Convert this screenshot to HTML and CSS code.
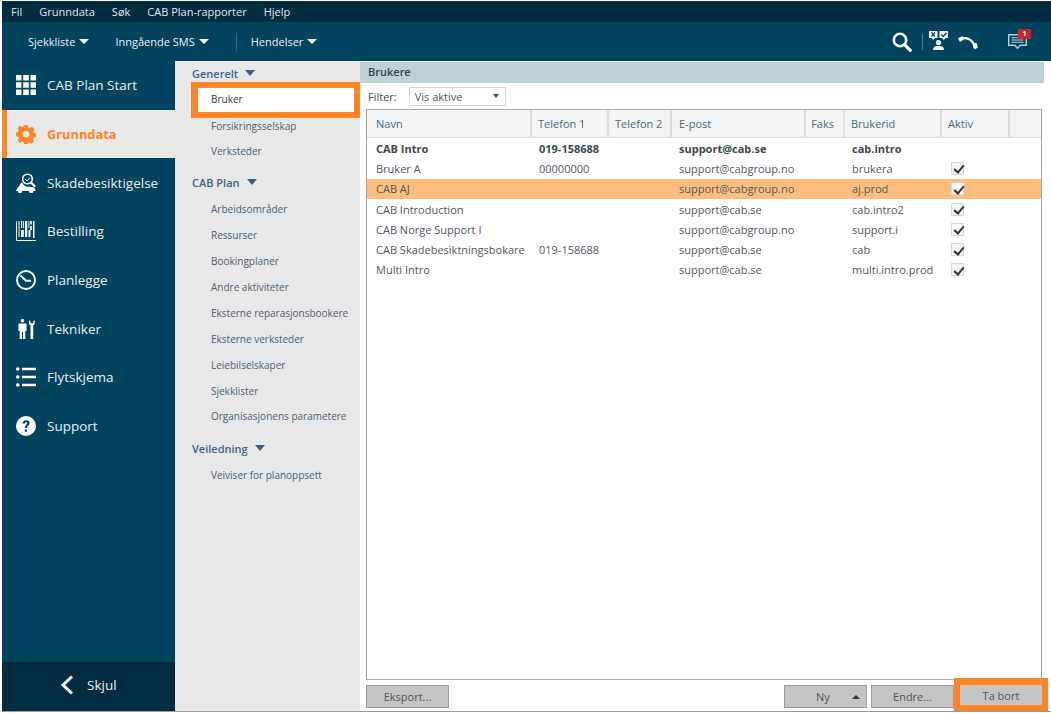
FILE: index.html
```html
<!DOCTYPE html>
<html lang="no">
<head>
<meta charset="utf-8">
<title>CAB Plan</title>
<link rel="stylesheet" href="styles.css">
</head>
<body>
<div class="app">
  <nav class="menubar">
    <span>Fil</span><span>Grunndata</span><span>Søk</span><span>CAB Plan-rapporter</span><span>Hjelp</span>
  </nav>
  <header class="toolbar">
    <span class="tool tool-a">Sjekkliste <i class="caret"></i></span>
    <span class="tool tool-b">Inngående SMS <i class="caret"></i></span>
    <span class="tool-sep"></span>
    <span class="tool">Hendelser <i class="caret"></i></span>
    <div class="tool-icons">
      <svg class="ti-search" width="20" height="20" viewBox="0 0 20 20"><circle cx="8" cy="8" r="6.200" fill="none" stroke="#fff" stroke-width="2.600"/><path d="M12.800 12.800 18.300 18.300" stroke="#fff" stroke-width="3.200" stroke-linecap="round"/></svg>
      <span class="ti-sep"></span>
      <svg class="ti-vote" width="19" height="19" viewBox="0 0 19 19"><path d="M0 0h8.500v7H6L4.300 9 2.500 7H0zM10.500 0H19v7h-2.500l-1.700 2L13 7h-2.500z" fill="#fff"/><path d="M2.500 1.500l3.400 4M5.900 1.500l-3.400 4" stroke="#00435f" stroke-width="1.300"/><path d="M12.300 3.500l2 2 3-3.700" stroke="#00435f" stroke-width="1.400" fill="none"/><circle cx="9.500" cy="11.500" r="2.600" fill="#fff"/><path d="M4 19c0-3 2-4.300 5.500-4.300S15 16 15 19z" fill="#fff"/></svg>
      <svg class="ti-phone" width="20" height="14" viewBox="0 0 20 14"><path d="M2.500 4.200C8 1.500 14 4 16.800 11" fill="none" stroke="#fff" stroke-width="2.200"/><path d="M0 3.200 4.500 1l1 3.800L2 7zM14.500 9.200l4-1.500 1.400 4.800-2.400 1.500-2-.8z" fill="#fff"/></svg>
      <span class="ti-chat">
        <svg width="19" height="15" viewBox="0 0 19 15"><path d="M.7.700h17.600v10.600h-6l-2.800 3-2.800-3h-6z" fill="none" stroke="#b9ccd4" stroke-width="1.400"/><path d="M3.500 3.700h12M3.500 6h12M3.500 8.300h12" stroke="#b9ccd4" stroke-width="1.100"/></svg>
        <b class="badge">1</b>
      </span>
    </div>
  </header>
  <div class="body">
    <aside class="sidebar">
      <a class="side-item">
        <svg class="side-icon" viewBox="0 0 20 20"><path d="M0 0h5.500v5.500H0zM7.200 0h5.600v5.500H7.200zM14.500 0H20v5.500h-5.500zM0 7.200h5.500v5.600H0zM7.200 7.200h5.600v5.600H7.200zM14.500 7.200H20v5.600h-5.500zM0 14.500h5.500V20H0zM7.200 14.500h5.600V20H7.200zM14.500 14.500H20V20h-5.500z" fill="#fff"/></svg>
        CAB Plan Start
      </a>
      <a class="side-item active">
        <svg class="side-icon" viewBox="0 0 20 20"><path fill="#ff8527" fill-rule="evenodd" d="M8 0h4l.6 2.800 1.700.7L16.700 2l2.800 2.800-1.500 2.400.7 1.700 2.300.6v4l-2.800.6-.7 1.700 1.500 2.400-2.800 2.800-2.400-1.500-1.700.7L12 22H8l-.6-2.800-1.700-.7L3.300 20 .5 17.200 2 14.800l-.7-1.700L-1 12.500v-4l2.300-.6.700-1.700L.5 3.800 3.300 1l2.400 1.500 1.700-.7zM10 6.800a3.700 3.700 0 1 0 0 7.400 3.700 3.700 0 0 0 0-7.400z" transform="translate(1 .9) scale(.9)"/></svg>
        Grunndata
      </a>
      <a class="side-item">
        <svg class="side-icon" viewBox="0 0 20 20"><path d="M1 15.500 0 18h1.800v-.1a2.200 2.200 0 0 0 4.400 0H13a2.200 2.200 0 0 0 4.400 0h2.200l-.6-2.500-2.200-1.500-5.500-.2A6 6 0 0 1 6.400 9.500L5 9.800 3 13.500z" fill="#fff"/><circle cx="11.500" cy="6" r="4.800" fill="none" stroke="#fff" stroke-width="1.600"/><path d="M15 9.500l3.500 3.500" stroke="#fff" stroke-width="2.200" stroke-linecap="round"/><path d="M9 6l2 2 3-3.500" stroke="#fff" fill="none"/></svg>
        Skadebesiktigelse
      </a>
      <a class="side-item">
        <svg class="side-icon" viewBox="0 0 20 20"><path d="M.5.500v19H20" fill="none" stroke="#fff"/><path d="M2.500 0h1v16h-1zM5 0h1.200v7H5zM7 0h.8v7H7zM9 0h2.200v16H9zM12.500 0h.9v7h-.9zM14.200 0h1.600v3.500h-1.600zM14.200 5h1.600v4h-1.600zM17 0h1.500v17H17zM5 9h2.800v7H5zM12.500 9h2v7h-2z" fill="#fff"/></svg>
        Bestilling
      </a>
      <a class="side-item">
        <svg class="side-icon" viewBox="0 0 20 20"><circle cx="10" cy="10" r="9" fill="none" stroke="#fff" stroke-width="2"/><path d="M4.500 5.500l5.500 5.200h5" fill="none" stroke="#fff" stroke-width="2"/></svg>
        Planlegge
      </a>
      <a class="side-item">
        <svg class="side-icon" viewBox="0 0 20 20"><circle cx="6.500" cy="1.800" r="1.800" fill="#fff"/><path d="M2.500 4.500h8v7.500H9.300v8H7v-7h-1v7H3.700v-8H2.500z" fill="#fff"/><path d="M13 1v4l1.500 1.500V20h2.700V6.500L18.700 5V1l-1.400 1.200V4h-2.900V2.200z" fill="#fff"/></svg>
        Tekniker
      </a>
      <a class="side-item">
        <svg class="side-icon" viewBox="0 0 20 20"><circle cx="1.800" cy="2" r="1.800" fill="#fff"/><circle cx="1.800" cy="10" r="1.800" fill="#fff"/><circle cx="1.800" cy="18" r="1.800" fill="#fff"/><path d="M6 .8h14v2.400H6zM6 8.800h14v2.400H6zM6 16.800h14v2.400H6z" fill="#fff"/></svg>
        Flytskjema
      </a>
      <a class="side-item">
        <svg class="side-icon" viewBox="0 0 20 20"><circle cx="10" cy="10" r="10" fill="#fff"/><path d="M6.500 7.500c0-2 1.500-3.300 3.600-3.300s3.500 1.200 3.500 3c0 2.600-2.700 2.600-2.700 4.800H8.800c0-3.200 2.300-3.200 2.300-4.800 0-.6-.4-1-1-1-.7 0-1.100.5-1.100 1.300z" fill="#00435f"/><path d="M8.800 13.500h2.200v2.300H8.800z" fill="#00435f"/></svg>
        Support
      </a>
      <a class="side-hide">
        <svg width="14" height="20" viewBox="0 0 14 20"><path d="M12 1.500 3 10l9 8.500" fill="none" stroke="#fff" stroke-width="3"/></svg>
        Skjul
      </a>
    </aside>
    <section class="subnav">
      <h3 class="sub-head sub-first">Generelt <i class="caret-sm"></i></h3>
      <a class="sub-item current">Bruker</a>
      <a class="sub-item">Forsikringsselskap</a>
      <a class="sub-item">Verksteder</a>
      <h3 class="sub-head">CAB Plan <i class="caret-sm"></i></h3>
      <a class="sub-item">Arbeidsområder</a>
      <a class="sub-item">Ressurser</a>
      <a class="sub-item">Bookingplaner</a>
      <a class="sub-item">Andre aktiviteter</a>
      <a class="sub-item">Eksterne reparasjonsbookere</a>
      <a class="sub-item">Eksterne verksteder</a>
      <a class="sub-item">Leiebilselskaper</a>
      <a class="sub-item">Sjekklister</a>
      <a class="sub-item">Organisasjonens parametere</a>
      <h3 class="sub-head sub-gap">Veiledning <i class="caret-sm"></i></h3>
      <a class="sub-item">Veiviser for planoppsett</a>
    </section>
    <main class="main">
      <h2 class="main-title">Brukere</h2>
      <div class="filter">
        <label>Filter:</label>
        <span class="select">Vis aktive <i class="caret-xs"></i></span>
      </div>
      <div class="table">
        <div class="row head">
          <span>Navn</span><span>Telefon 1</span><span>Telefon 2</span><span>E-post</span><span class="right">Faks</span><span>Brukerid</span><span>Aktiv</span><span></span>
        </div>
        <div class="row bold"><span>CAB Intro</span><span>019-158688</span><span></span><span>support@cab.se</span><span></span><span>cab.intro</span><span></span><span></span></div>
        <div class="row"><span>Bruker A</span><span>00000000</span><span></span><span>support@cabgroup.no</span><span></span><span>brukera</span><span><i class="check"></i></span><span></span></div>
        <div class="row selected"><span>CAB AJ</span><span></span><span></span><span>support@cabgroup.no</span><span></span><span>aj.prod</span><span><i class="check"></i></span><span></span></div>
        <div class="row"><span>CAB Introduction</span><span></span><span></span><span>support@cab.se</span><span></span><span>cab.intro2</span><span><i class="check"></i></span><span></span></div>
        <div class="row"><span>CAB Norge Support I</span><span></span><span></span><span>support@cabgroup.no</span><span></span><span>support.i</span><span><i class="check"></i></span><span></span></div>
        <div class="row"><span>CAB Skadebesiktningsbokare</span><span>019-158688</span><span></span><span>support@cab.se</span><span></span><span>cab</span><span><i class="check"></i></span><span></span></div>
        <div class="row"><span>Multi Intro</span><span></span><span></span><span>support@cab.se</span><span></span><span>multi.intro.prod</span><span><i class="check"></i></span><span></span></div>
      </div>
      <div class="actions">
        <button class="btn btn-export">Eksport...</button>
        <button class="btn btn-new"><span>Ny</span><i class="caret-up"></i></button>
        <button class="btn btn-edit">Endre...</button>
        <span class="hl-wrap"><button class="btn btn-del">Ta bort</button></span>
      </div>
    </main>
  </div>
</div>
</body>
</html>
```
FILE: styles.css
```css
* { box-sizing: border-box; }
html, body { margin: 0; height: 100%; background: #fff; overflow: hidden; }
body { font-family: "Open Sans", "Noto Sans", sans-serif; font-size: 11px; color: #4d5a62; }
.app { margin: 1px 0 0 2px; height: 711px; width: 1049px; display: flex; flex-direction: column; border-bottom: 1px solid #999; }
.menubar { height: 21px; flex: none; background: #022c40; color: #dfe8ec; display: flex; align-items: center; gap: 17px; padding-left: 9px; font-size: 11px; }
.toolbar { height: 39px; flex: none; background: #00435f; color: #e6eef2; display: flex; align-items: center; padding-left: 26px; font-size: 11px; }
.tool { display: inline-flex; align-items: center; gap: 4px; }
.tool-a { margin-right: 26px; }
.tool-b { margin-right: 27px; }
.tool-sep { width: 1px; height: 18px; background: #33697f; margin-right: 14px; }
.caret { width: 0; height: 0; border-left: 5px solid transparent; border-right: 5px solid transparent; border-top: 5px solid #fff; }
.tool-icons { margin-left: auto; display: flex; align-items: center; padding-right: 24px; }
.ti-search { margin-right: 10px; }
.ti-sep { width: 1px; height: 16px; background: #4a7c90; margin-right: 6px; }
.ti-vote { margin-right: 10px; margin-top: -2px; }
.ti-phone { margin-right: 30px; margin-top: 1px; }
.ti-chat { position: relative; display: block; width: 19px; height: 15px; }
.ti-chat svg { display: block; }
.badge { position: absolute; top: -5px; right: -4px; width: 13px; height: 10px; background: #c9252b; color: #fff; font-size: 7px; line-height: 10px; text-align: center; }
.body { flex: 1; display: flex; min-height: 0; }
.sidebar { width: 173px; flex: none; background: #00435f; display: flex; flex-direction: column; }
.side-item { height: 48.700px; flex: none; display: flex; align-items: center; gap: 11px; padding-left: 14px; color: #e8f0f4; font-size: 13.500px; }
.side-icon { width: 20px; height: 20px; flex: none; }
.side-item.active { background: #e8e8e8; color: #ff8527; font-weight: 700; font-size: 12.800px; border-left: 5px solid #ff8527; padding-left: 9px; }
.side-hide { margin-top: auto; height: 49px; background: #022c40; color: #e8f0f4; font-size: 13.500px; display: flex; align-items: center; gap: 13px; padding: 0 0 3px 58px; }
.subnav { width: 185px; flex: none; background: #e8e8e8; padding-left: 17px; display: flex; flex-direction: column; align-items: flex-start; }
.sub-head { margin: 4px 0 2px; height: 26px; flex: none; font-size: 11px; font-weight: 600; color: #40648a; display: flex; align-items: center; gap: 7px; }
.sub-first { margin: -1px 0 0; }
.sub-gap { margin-top: 5px; }
.caret-sm { width: 0; height: 0; border-left: 5px solid transparent; border-right: 5px solid transparent; border-top: 6px solid #3f5f80; }
.sub-item { height: 25.900px; flex: none; line-height: 25.900px; padding-left: 19px; font-size: 10px; color: #4a6478; white-space: nowrap; }
.sub-item.current { width: 169px; height: 36px; margin: -4px 0 -4.500px -1px; border: 6px solid #ff8527; border-left-width: 7px; background: #fff; color: #2f3a42; line-height: 23px; padding-left: 13px; }
.main { flex: 1; min-width: 0; padding-right: 7px; display: flex; flex-direction: column; background: #fff; }
.main-title { margin: 1px 0 0; height: 21px; flex: none; background: #bfd0d7; color: #33444f; font-size: 11px; font-weight: 600; line-height: 20px; padding-left: 8px; }
.filter { height: 26px; flex: none; display: flex; align-items: center; gap: 12px; padding-left: 8px; color: #3b4a54; font-size: 11px; }
.select { width: 97px; height: 19px; border: 1px solid #d5d5d5; padding: 0 6px 0 5px; line-height: 17px; font-size: 11px; color: #4d5a62; display: flex; align-items: center; justify-content: space-between; }
.caret-xs { width: 0; height: 0; border-left: 3.500px solid transparent; border-right: 3.500px solid transparent; border-top: 4px solid #444; }
.table { flex: 1; margin: 0 2px 0 6px; border: 1px solid #a3a9ad; min-height: 0; }
.row { display: grid; grid-template-columns: 165px 77px 63px 134px 39px 97px 68px 31px; height: 20.300px; align-items: center; font-size: 11px; color: #4d5a62; }
.row > span { padding-left: 7px; white-space: nowrap; overflow: hidden; }
.row > span:first-child { padding-left: 9px; }
.row > span:nth-child(7) { padding-left: 9px; display: flex; }
.row.head { height: 28px; background: #f4f4f4; border-bottom: 1px solid #dcdcdc; color: #4d6a80; align-items: stretch; }
.row.head > span { line-height: 27px; border-right: 2px solid #dedede; padding-left: 6px; }
.row.head > span:nth-child(4) { padding-left: 7px; }
.row.head > span:last-child { border-right: 0; }
.row.head > span:first-child { padding-left: 9px; }
.row.head > .right { text-align: right; padding: 0 9px 0 0; }
.row.bold { font-weight: 700; color: #3d4850; }
.row.selected { background: #ffbd7c; }
.check { width: 13px; height: 13px; background: #f6f6f6; border: 1px solid #d8d8d8; position: relative; display: block; }
.check::after { content: ""; position: absolute; left: 3.500px; top: 0.500px; width: 4px; height: 8px; border: solid #333; border-width: 0 2px 2px 0; transform: rotate(40deg); }
.actions { height: 31px; flex: none; display: flex; align-items: flex-start; padding: 5px 0 0 6px; }
.btn { height: 23px; background: #c4c4c4; border: 1px solid #9c9c9c; color: #555; font: 11px "Open Sans", "Noto Sans", sans-serif; padding: 0; }
.btn-export { width: 83px; margin-right: auto; }
.btn-new { width: 83px; margin-right: 4px; display: flex; align-items: center; }
.btn-new span { margin-left: 31px; }
.caret-up { width: 0; height: 0; border-left: 4px solid transparent; border-right: 4px solid transparent; border-bottom: 4px solid #333; margin-left: auto; margin-right: 6px; }
.btn-edit { width: 83px; }
.hl-wrap { display: block; width: 94px; height: 33px; flex: none; border: 6px solid #ff8527; border-top-width: 7px; margin: -7px -4px 0 0; }
.btn-del { display: block; width: 82px; height: 20px; border-color: #c4c4c4; }
```
